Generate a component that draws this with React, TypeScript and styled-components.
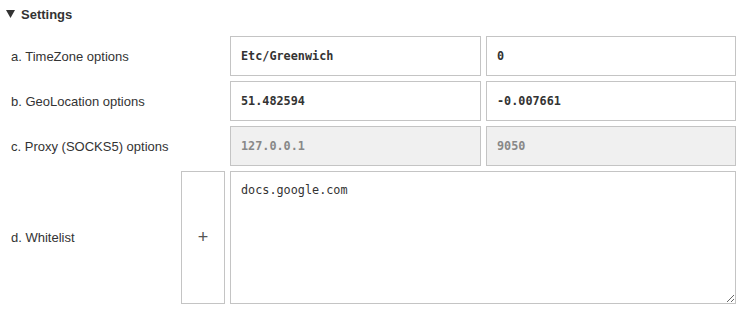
import React from 'react';
import styled, { createGlobalStyle } from 'styled-components';

const GlobalStyle = createGlobalStyle`
  body {
    margin: 0;
    background: #fff;
    font-family: "Liberation Sans", Arial, sans-serif;
    color: #333;
  }
`;

const Panel = styled.details`
  padding: 0 5px 0 6px;
`;

const Summary = styled.summary`
  list-style: none;
  display: flex;
  align-items: center;
  gap: 6px;
  height: 28px;
  font-size: 13px;
  font-weight: bold;
  color: #333;
  cursor: pointer;
  &::-webkit-details-marker {
    display: none;
  }
`;

const Arrow = styled.svg`
  width: 9px;
  height: 8px;
  fill: #333;
`;

const Grid = styled.div`
  display: grid;
  grid-template-columns: 165px 44px 251px 250px;
  grid-template-rows: 40px 40px 40px 133px;
  column-gap: 5px;
  row-gap: 5px;
  margin-top: 8px;
  padding-left: 5px;
`;

const Label = styled.div<{ $span?: boolean }>`
  grid-column: ${p => (p.$span ? '1 / 3' : '1 / 2')};
  display: flex;
  align-items: center;
  font-size: 13px;
  color: #333;
`;

const Field = styled.input`
  box-sizing: border-box;
  width: 100%;
  height: 100%;
  margin: 0;
  padding: 0 10px;
  border: 1px solid #c4c4c4;
  border-radius: 0;
  outline: none;
  font-family: "DejaVu Sans Mono", "Liberation Mono", monospace;
  font-size: 11.8px;
  font-weight: bold;
  color: #333;
  background: #fff;
  &:disabled {
    background: #f0f0f0;
    color: #888;
  }
`;

const AddButton = styled.button`
  box-sizing: border-box;
  height: 100%;
  margin: 0;
  border: 1px solid #c4c4c4;
  background: #fff;
  color: #555;
  font-family: "Liberation Sans", Arial, sans-serif;
  font-size: 18px;
  cursor: pointer;
`;

const WhiteList = styled.textarea`
  grid-column: 3 / 5;
  box-sizing: border-box;
  width: 100%;
  height: 100%;
  margin: 0;
  padding: 10px;
  border: 1px solid #c4c4c4;
  outline: none;
  font-family: "DejaVu Sans Mono", "Liberation Mono", monospace;
  font-size: 11.8px;
  line-height: 16px;
  color: #333;
`;

const App: React.FC = () => {
  return (
    <>
      <GlobalStyle />
      <Panel open>
        <Summary>
          <Arrow viewBox="0 0 9 8">
            <polygon points="0,0 9,0 4.5,8" />
          </Arrow>
          Settings
        </Summary>
        <Grid>
          <Label $span>a. TimeZone options</Label>
          <Field defaultValue="Etc/Greenwich" />
          <Field defaultValue="0" />

          <Label $span>b. GeoLocation options</Label>
          <Field defaultValue="51.482594" />
          <Field defaultValue="-0.007661" />

          <Label $span>c. Proxy (SOCKS5) options</Label>
          <Field defaultValue="127.0.0.1" disabled />
          <Field defaultValue="9050" disabled />

          <Label>d. Whitelist</Label>
          <AddButton>+</AddButton>
          <WhiteList defaultValue="docs.google.com" />
        </Grid>
      </Panel>
    </>
  );
};

export default App;
